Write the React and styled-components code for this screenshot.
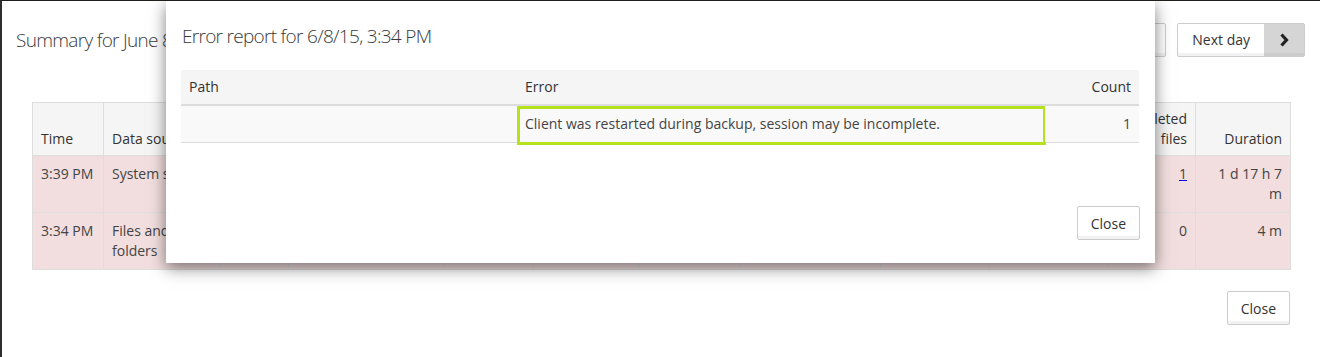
import React from "react";
import styled, { createGlobalStyle } from "styled-components";

const GlobalStyle = createGlobalStyle`
  html, body {
    margin: 0;
    padding: 0;
    background: #ffffff;
  }
  body {
    font-family: "Open Sans", "Liberation Sans", sans-serif;
    font-size: 14px;
    line-height: 20px;
    color: #333333;
  }
`;

const columns = [
  { title: "Time", width: 71 },
  { title: "Data source", width: 117 },
  { title: "Type", width: 68 },
  { title: "Status", width: 155 },
  { title: "Errors", width: 90, num: true },
  { title: "Files", width: 105, num: true },
  { title: "Size", width: 102, num: true },
  { title: "Transferred", width: 140, num: true },
  { title: "New files", width: 109, num: true },
  { title: "Changed files", width: 118, num: true },
  { title: "Deleted files", width: 88, num: true },
  { title: "Duration", width: 95, num: true },
];

const sessions = [
  ["3:39 PM", "System state", "Full", "Warning", "1", "12", "4 GB", "1 GB", "3", "2", "1", "1 d 17 h 7 m"],
  ["3:34 PM", "Files and folders", "Full", "Warning", "1", "5", "2 MB", "1 MB", "0", "0", "0", "4 m"],
];

export default function App() {
  return (
    <>
      <GlobalStyle />
      <Page>
        <TopBar>
          <Title>Summary for June 8, 2015</Title>
          <DayNav>
            <DayButton>
              <Chevron $dir="left" />
              <DayLabel>Previous day</DayLabel>
            </DayButton>
            <DayButton>
              <DayLabel>Next day</DayLabel>
              <Chevron $dir="right" />
            </DayButton>
          </DayNav>
        </TopBar>

        <Content>
          <SummaryTable>
            <colgroup>
              {columns.map((c) => (
                <col key={c.title} style={{ width: c.width }} />
              ))}
            </colgroup>
            <thead>
              <tr>
                {columns.map((c) => (
                  <SummaryHead key={c.title} $num={c.num}>
                    {c.title}
                  </SummaryHead>
                ))}
              </tr>
            </thead>
            <tbody>
              {sessions.map((row, idx) => (
                <tr key={row[0] + idx}>
                  {row.map((cell, i) => (
                    <SummaryCell key={i} $num={columns[i].num}>
                      {i === 10 && cell === "1" ? <CountLink>{cell}</CountLink> : cell}
                    </SummaryCell>
                  ))}
                </tr>
              ))}
            </tbody>
          </SummaryTable>
          <Footer>
            <Button>Close</Button>
          </Footer>
        </Content>

        <Modal>
          <ModalHeader>
            <ModalTitle>Error report for 6/8/15, 3:34 PM</ModalTitle>
          </ModalHeader>
          <ModalBody>
            <ErrorTable>
              <colgroup>
                <col style={{ width: 336 }} />
                <col style={{ width: 528 }} />
                <col style={{ width: 94 }} />
              </colgroup>
              <thead>
                <tr>
                  <ErrorHead>Path</ErrorHead>
                  <ErrorHead>Error</ErrorHead>
                  <ErrorHead $num>Count</ErrorHead>
                </tr>
              </thead>
              <tbody>
                <tr>
                  <ErrorCell />
                  <ErrorCell $focused>
                    Client was restarted during backup, session may be incomplete.
                  </ErrorCell>
                  <ErrorCell $num>1</ErrorCell>
                </tr>
              </tbody>
            </ErrorTable>
          </ModalBody>
          <ModalFooter>
            <Button>Close</Button>
          </ModalFooter>
        </Modal>
      </Page>
    </>
  );
}

function Chevron({ $dir }) {
  return (
    <ChevronBox>
      <svg width="10" height="14" viewBox="0 0 10 14">
        <path
          d={$dir === "left" ? "M7.5 1.5 L2.5 7 L7.5 12.5" : "M2.5 1.5 L7.5 7 L2.5 12.5"}
          fill="none"
          stroke="#222"
          strokeWidth="3.2"
          strokeLinejoin="miter"
        />
      </svg>
    </ChevronBox>
  );
}

const Page = styled.div`
  position: relative;
  height: 356px;
  overflow: hidden;
  border-top: 1px solid #1d1f1a;
  border-left: 2px solid #2e2e2e;
`;

const TopBar = styled.div`
  display: flex;
  justify-content: space-between;
  align-items: center;
  padding: 22px 15px 0 14px;
`;

const Title = styled.h2`
  margin: 0;
  font-size: 19px;
  line-height: 28px;
  font-weight: 300;
  letter-spacing: -0.7px;
  color: #3a3a3a;
`;

const DayNav = styled.div`
  display: flex;
  gap: 11px;
`;

const DayButton = styled.div`
  display: flex;
  height: 34px;
  box-sizing: border-box;
  border: 1px solid #cccccc;
  border-radius: 2px;
  overflow: hidden;
  background: #fff;
  box-shadow: inset 0 -3px 0 rgba(0, 0, 0, 0.05);
`;

const DayLabel = styled.span`
  display: flex;
  align-items: center;
  padding: 0 14px;
  color: #333;
`;

const ChevronBox = styled.span`
  display: flex;
  align-items: center;
  justify-content: center;
  width: 40px;
  background: #d5d5d5;
  box-shadow: inset 0 -3px 0 rgba(0, 0, 0, 0.04);
`;

const Content = styled.div`
  padding: 45px 30px 0 30px;
`;

const SummaryTable = styled.table`
  width: 1258px;
  table-layout: fixed;
  border-collapse: collapse;
`;

const SummaryHead = styled.th`
  padding: 6px 8px;
  border: 1px solid #dddddd;
  background: #f5f5f5;
  font-weight: 400;
  vertical-align: bottom;
  text-align: ${(p) => (p.$num ? "right" : "left")};
  color: #333;
`;

const SummaryCell = styled.td`
  padding: 8px;
  border: 1px solid #dddddd;
  background: #f2dede;
  vertical-align: top;
  text-align: ${(p) => (p.$num ? "right" : "left")};
  color: #444;
`;

const CountLink = styled.a`
  color: #444;
  text-decoration: underline;
  text-decoration-color: #0000ee;
`;

const Footer = styled.div`
  display: flex;
  justify-content: flex-end;
  margin-top: 21px;
`;

const Button = styled.button`
  height: 34px;
  padding: 0 13px;
  font-family: inherit;
  font-size: 14px;
  color: #333;
  background: #fff;
  border: 1px solid #cccccc;
  border-radius: 2px;
  box-shadow: inset 0 -3px 0 rgba(0, 0, 0, 0.05);
`;

const Modal = styled.div`
  position: absolute;
  top: 0;
  left: 164px;
  width: 989px;
  background: #fff;
  box-shadow: 0 5px 15px rgba(0, 0, 0, 0.5);
`;

const ModalHeader = styled.div`
  padding: 21px 15px 0 16px;
`;

const ModalTitle = styled.h4`
  margin: 0;
  font-size: 19px;
  line-height: 28px;
  font-weight: 300;
  letter-spacing: -0.7px;
  color: #3a3a3a;
`;

const ModalBody = styled.div`
  padding: 20px 16px 0 15px;
`;

const ErrorTable = styled.table`
  width: 958px;
  table-layout: fixed;
  border-collapse: collapse;
`;

const ErrorHead = styled.th`
  padding: 7px 8px;
  background: #f5f5f5;
  border-bottom: 2px solid #dddddd;
  font-weight: 400;
  text-align: ${(p) => (p.$num ? "right" : "left")};
  color: #333;
`;

const ErrorCell = styled.td`
  position: relative;
  height: 20px;
  padding: 8px;
  background: #f9f9f9;
  border-bottom: 1px solid #dddddd;
  text-align: ${(p) => (p.$num ? "right" : "left")};
  color: #444;

  ${(p) =>
    p.$focused &&
    `
    &::after {
      content: "";
      position: absolute;
      top: 0;
      left: 0;
      right: -1px;
      bottom: -3px;
      border: 3px solid #b5e21c;
    }
  `}
`;

const ModalFooter = styled.div`
  display: flex;
  justify-content: flex-end;
  padding: 63px 15px 23px 0;
`;
